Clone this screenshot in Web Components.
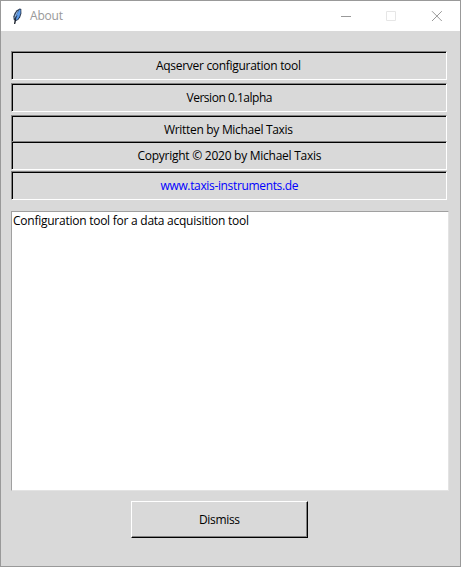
<!DOCTYPE html>
<html lang="en">
<head>
<meta charset="utf-8">
<title>About</title>
<style>
html,body{margin:0;height:100%;overflow:hidden}
body{font:12px/16px "Open Sans","Noto Sans",sans-serif;color:#000}
</style>
</head>
<body>
<about-window></about-window>
<script>
const define = (name, html, init) => {
  const template = document.createElement('template');
  template.innerHTML = html;
  customElements.define(name, class extends HTMLElement {
    connectedCallback() {
      if (this.shadowRoot) return;
      this.attachShadow({mode: 'open'}).append(template.content.cloneNode(true));
      if (init) init(this);
    }
  });
};

// A single line of text tracked to an exact width in pixels.
define('fit-text', `<style>:host{display:inline-block;white-space:nowrap;line-height:16px}span{display:inline-block}</style><span><slot></slot></span>`, el => {
  const span = el.shadowRoot.querySelector('span');
  const want = Number(el.getAttribute('width'));
  const count = el.textContent.length;
  const spacing = (want - span.getBoundingClientRect().width) / (count - 1);
  span.style.letterSpacing = spacing + 'px';
  span.style.marginRight = -spacing + 'px';
});

define('quill-icon', `<style>:host{display:block;width:10px;height:17px}svg{display:block}</style>
<svg width="10" height="17" viewBox="0 0 10 17">
<path d="M7.7 .6 9.3 1 9.4 5.5 8.2 9.3 6.4 11.8 3.6 13.2 1.8 12 1.3 8.5 2.6 5 4.8 2.2Z" fill="#2b3a50"/>
<path d="M7.6 1.5 8.6 1.7 8.4 5.5 7.2 9 5.5 11.4 3.7 12 4 8 5.8 4.3Z" fill="#5c9bea"/>
<path d="M6.6 2 4.6 4.2 3 7.2 2.2 10.6 3.2 9.4 5 5.6Z" fill="#9dbfe6"/>
<path d="M5 7.5 3.8 10.2 2.8 15.8" fill="none" stroke="#101722" stroke-width=".7"/>
<path d="M3.2 12.5 2.6 16" fill="none" stroke="#101722"/>
</svg>`);

define('title-bar', `<style>
:host{display:flex;height:30px;background:#fff;color:#999;align-items:center;padding-left:11px;box-sizing:border-box}
fit-text{margin-left:8px}
.controls{margin-left:auto;display:flex;margin-right:1px}
svg{display:block;width:45px;height:29px}
</style>
<quill-icon></quill-icon><fit-text width="33">About</fit-text>
<div class="controls">
<svg viewBox="0 0 45 29"><path d="M17 14.5h10" stroke="#999"/></svg>
<svg viewBox="0 0 45 29"><path d="M17.5 9.5h9v9h-9z" fill="none" stroke="#e6e6e6"/></svg>
<svg viewBox="0 0 45 29"><path d="m18 9.2 9.8 9.8m0-9.8-9.8 9.8" fill="none" stroke="#999" stroke-width="1"/></svg>
</div>`);

define('sunken-label', `<style>
:host{display:flex;box-sizing:border-box;height:29px;justify-content:center;align-items:center;background:#d9d9d9;border:1px solid;border-color:#828282 #fff #fff #828282;box-shadow:inset 1px 1px #000;padding:0 1px 0 0}
:host([even]){padding:0 0 0 1px}
</style><slot></slot>`);

define('text-panel', `<style>
:host{display:block;box-sizing:border-box;width:438px;height:280px;background:#fff;border:1px solid;border-color:#a0a0a0 #e3e3e3 #e3e3e3 #a0a0a0;padding:1px}
</style><slot></slot>`);

define('raised-button', `<style>
:host{display:block}
button{display:flex;align-items:center;justify-content:center;width:177px;height:37px;box-sizing:border-box;font:inherit;color:inherit;background:#d9d9d9;border:1px solid;border-color:#fff #000 #000 #fff;border-radius:0;box-shadow:inset -1px -1px #828282;padding:0}
</style><button><slot></slot></button>`);

define('about-window', `<style>
:host{display:block;box-sizing:border-box;width:461px;height:567px;background:#d9d9d9;border:1px solid #999}
main{display:flex;flex-direction:column;padding:20px 11px 0 10px}
.labels{display:grid;grid-template-rows:32px 32px 26px 30px 29px;width:436px}
.link{color:#00f}
text-panel{margin-top:11px}
raised-button{margin:10px 0 0 120px}
</style>
<title-bar></title-bar>
<main>
<div class="labels">
<sunken-label><fit-text width="145">Aqserver configuration tool</fit-text></sunken-label>
<sunken-label even><fit-text width="86">Version 0.1alpha</fit-text></sunken-label>
<sunken-label><fit-text width="129">Written by Michael Taxis</fit-text></sunken-label>
<sunken-label even><fit-text width="184">Copyright © 2020 by Michael Taxis</fit-text></sunken-label>
<sunken-label even class="link"><fit-text width="138">www.taxis-instruments.de</fit-text></sunken-label>
</div>
<text-panel><fit-text width="236">Configuration tool for a data acquisition tool</fit-text></text-panel>
<raised-button><fit-text width="41">Dismiss</fit-text></raised-button>
</main>`);
</script>
</body>
</html>
